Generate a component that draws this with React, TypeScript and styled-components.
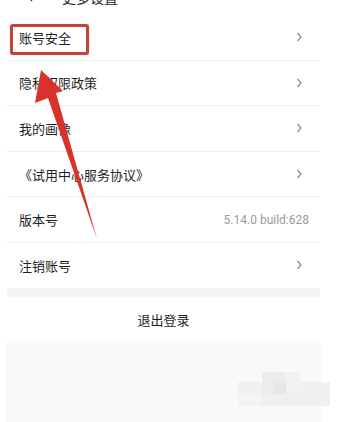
import styled, { createGlobalStyle } from "styled-components";

const GlobalStyle = createGlobalStyle`
  html, body {
    margin: 0;
    padding: 0;
    background: #fff;
  }
  body {
    font-family: "Noto Sans CJK SC", "Noto Sans", sans-serif;
    overflow: hidden;
  }
`;

const Screen = styled.div`
  position: relative;
  width: 357px;
  height: 422px;
  overflow: hidden;
  background: #fff;
`;

const Page = styled.div`
  width: 313px;
  margin: -21px 0 0 7px;
  display: flex;
  flex-direction: column;
`;

const Header = styled.div`
  height: 36px;
  display: flex;
  align-items: center;
  padding-left: 20px;
  gap: 28px;
  font-size: 14px;
  color: #222;
`;

const List = styled.div`
  display: flex;
  flex-direction: column;
`;

const Row = styled.div<{ $last?: boolean }>`
  height: 44.6px;
  display: flex;
  align-items: center;
  justify-content: space-between;
  padding: 0 17px 0 12px;
  border-bottom: ${(p) => (p.$last ? "none" : "1px solid #efefef")};
  font-size: 13px;
  color: #1e1e1e;
`;

const Value = styled.span`
  font-family: Roboto, "Liberation Sans", sans-serif;
  font-size: 12px;
  color: #9a9a9a;
  margin-right: -6px;
`;

const Band = styled.div`
  height: 9px;
  background: #f5f5f5;
`;

const Logout = styled.div`
  height: 46px;
  display: flex;
  align-items: center;
  justify-content: center;
  font-size: 13px;
  color: #1e1e1e;
`;

const Bottom = styled.div`
  position: relative;
  height: 90px;
  margin: 0 -2px;
  background: #f9f9f9;
`;

const Mosaic = styled.svg`
  position: absolute;
  left: 233px;
  top: 25px;
`;

const Highlight = styled.div`
  position: absolute;
  left: 10px;
  top: 24px;
  width: 73px;
  height: 25px;
  border: 3px solid #c0433c;
  border-radius: 3px;
  box-shadow: 0 0 1px rgba(160, 40, 30, 0.5);
`;

const Arrow = styled.svg`
  position: absolute;
  left: 0;
  top: 0;
  pointer-events: none;
`;

const Chevron = ({ left = false }: { left?: boolean }) => (
  <svg width="7" height="10" viewBox="0 0 7 10">
    <path
      d={left ? "M5 1 L1.5 5 L5 9" : "M1.5 1 L5 5 L1.5 9"}
      fill="none"
      stroke={left ? "#333" : "#8a8a8a"}
      strokeWidth="1.2"
    />
  </svg>
);

const items = [
  { label: "账号安全" },
  { label: "隐私权限政策" },
  { label: "我的画像" },
  { label: "《试用中心服务协议》" },
  { label: "版本号", value: "5.14.0 build:628" },
  { label: "注销账号" },
];

export default function App() {
  return (
    <Screen>
      <GlobalStyle />
      <Page>
        <Header>
          <Chevron left />
          <span>更多设置</span>
        </Header>
        <List>
          {items.map((item, i) => (
            <Row key={item.label} $last={i === items.length - 1}>
              <span>{item.label}</span>
              {item.value ? <Value>{item.value}</Value> : <Chevron />}
            </Row>
          ))}
        </List>
        <Band />
        <Logout>退出登录</Logout>
        <Bottom>
          <Mosaic width="92" height="42" viewBox="0 0 92 42">
            <rect x="0" y="14" width="92" height="24" fill="#f0f0f0" />
            <rect x="24" y="4" width="24" height="22" fill="#ececec" />
            <rect x="48" y="4" width="14" height="18" fill="#f2f2f2" />
            <rect x="36" y="14" width="12" height="12" fill="#e6e6e6" />
            <rect x="0" y="26" width="24" height="12" fill="#f4f4f4" />
          </Mosaic>
        </Bottom>
      </Page>
      <Highlight />
      <Arrow width="357" height="422" viewBox="0 0 357 422">
        <path
          d="M41 70 L63 91 L56 93 L97 239 L48 98 L35 103 Z"
          fill="#d8322b"
        />
      </Arrow>
    </Screen>
  );
}
